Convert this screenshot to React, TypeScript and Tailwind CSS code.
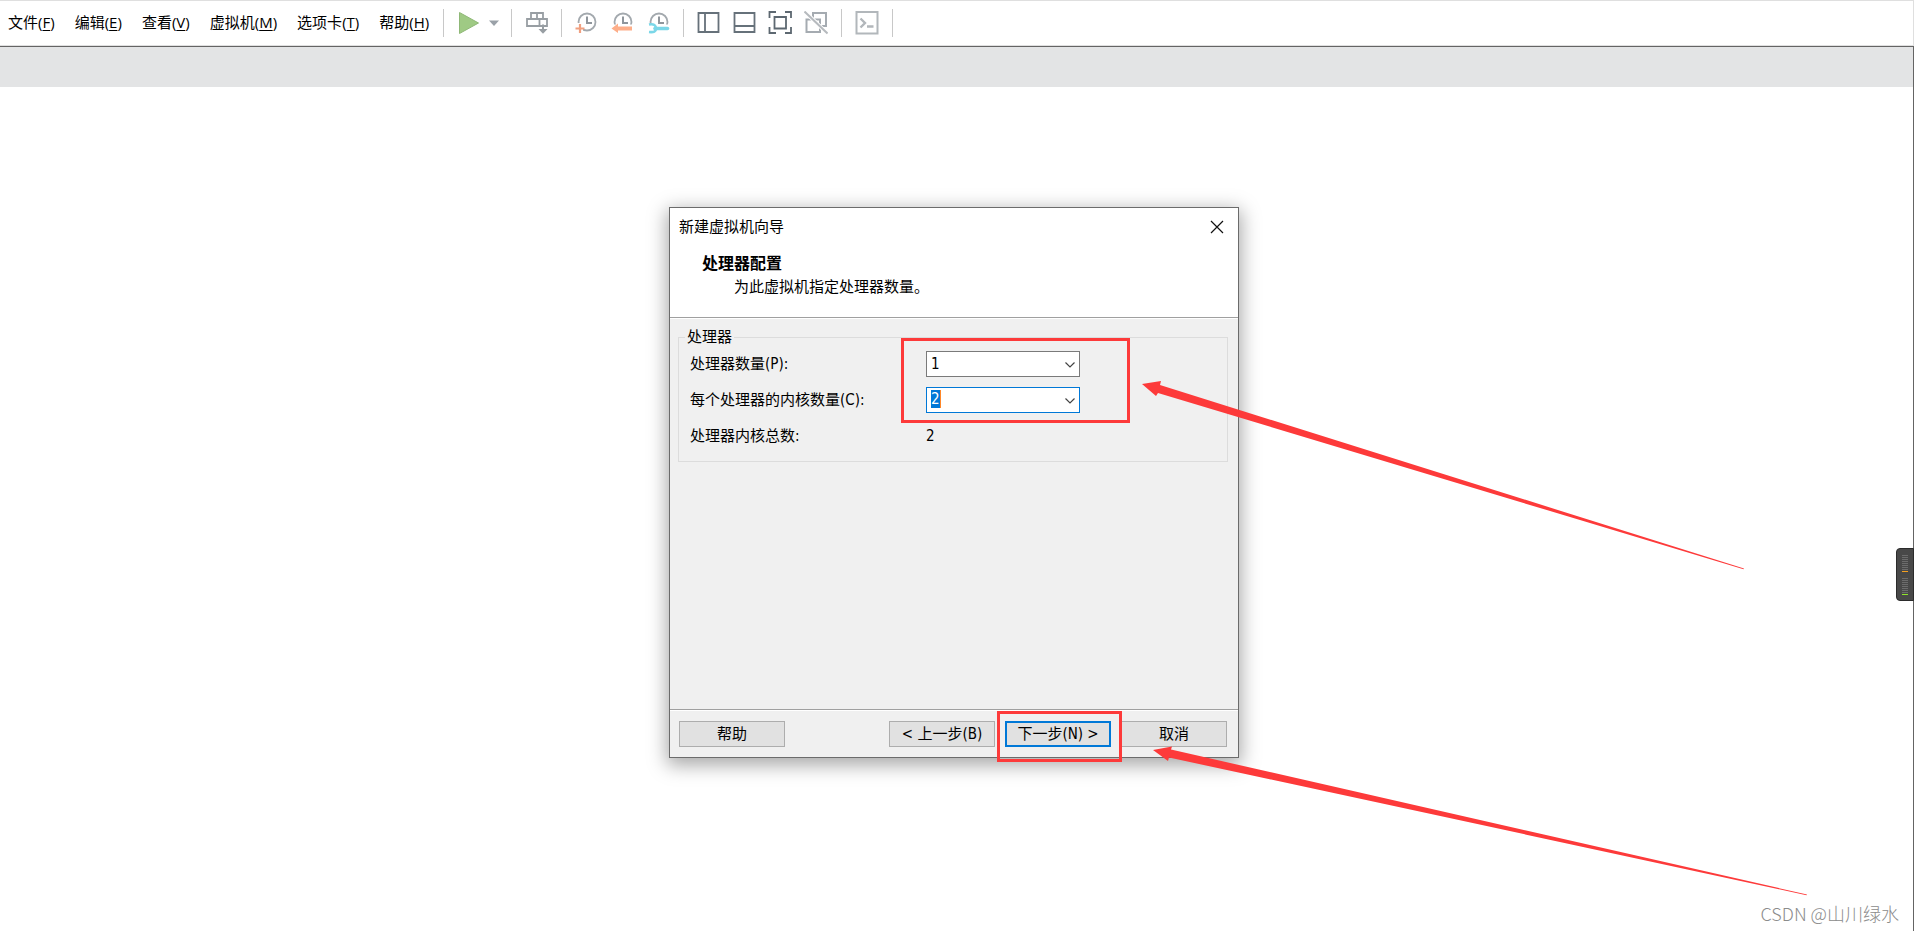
// App.tsx
// Virtual machine manager window with the "new virtual machine" wizard open
// on the processor step.

import type { ReactNode } from "react";

const MENUS = [
  { label: "文件", accel: "F" },
  { label: "编辑", accel: "E" },
  { label: "查看", accel: "V" },
  { label: "虚拟机", accel: "M" },
  { label: "选项卡", accel: "T" },
  { label: "帮助", accel: "H" },
];

const METER_ROWS = [0, 1, 2, 3, 4, 5, 6, 7];

function Separator() {
  return <span className="h-7 w-px shrink-0 bg-[#c8c8c8]" />;
}

function ToolButton({ title, children }: { title: string; children: ReactNode }) {
  return (
    <button type="button" aria-label={title} className="flex h-6 w-6 shrink-0 items-center justify-center">
      {children}
    </button>
  );
}

function ClockFace() {
  return (
    <>
      <circle cx="13" cy="11" r="8.5" fill="none" stroke="#a3a9ae" strokeWidth="1.8" />
      <path d="M13 5.5V12h5" fill="none" stroke="#8f969c" strokeWidth="2" />
    </>
  );
}

function Toolbar() {
  return (
    <div className="flex items-center">
      <Separator />
      <button type="button" aria-label="开机" className="ml-[15px] flex h-6 w-5 items-center">
        <svg width="20" height="22" viewBox="0 0 20 22">
          <path d="M0.5 0.5L19.5 11L0.5 21.5Z" fill="#9fca84" stroke="#8fb877" />
        </svg>
      </button>
      <button type="button" aria-label="电源选项" className="mr-3 ml-[10px] flex h-6 w-[10px] items-center">
        <svg width="10" height="6" viewBox="0 0 10 6">
          <path d="M0 0.5H10L5 6Z" fill="#9aa1a8" />
        </svg>
      </button>
      <Separator />
      <div className="mr-3 ml-[13px] flex">
        <ToolButton title="发送 Ctrl+Alt+Del">
          <svg width="24" height="24" viewBox="0 0 24 24" fill="none" stroke="#989ea3" strokeWidth="1.8">
            <path d="M6 8V2H18V8M12 2V8M2 8H22V15H2ZM14.5 8V15" />
            <path d="M18 13.5V20" strokeWidth="2" />
            <path d="M13.5 18H22.5L18 22.8Z" fill="#989ea3" stroke="none" />
          </svg>
        </ToolButton>
      </div>
      <Separator />
      <div className="mr-[13px] ml-3 flex gap-3">
        <ToolButton title="拍摄快照">
          <svg width="24" height="24" viewBox="0 0 24 24">
            <ClockFace />
            <path d="M1 12H9V22H1Z" fill="#fff" />
            <path d="M6 13V22M1.5 17.5H10.5" stroke="#f0a080" strokeWidth="2.2" />
          </svg>
        </ToolButton>
        <ToolButton title="恢复快照">
          <svg width="24" height="24" viewBox="0 0 24 24">
            <ClockFace />
            <path d="M0 13.5H24V24H0Z" fill="#fff" />
            <path d="M1.5 17.5L8 12.5V15.5H22V19.5H8V22Z" fill="#fdae89" />
          </svg>
        </ToolButton>
        <ToolButton title="管理快照">
          <svg width="24" height="24" viewBox="0 0 24 24">
            <ClockFace />
            <path d="M0 13.5H24V24H0Z" fill="#fff" />
            <path d="M3 13.5C8 12.5 10 14.5 10 17.5S8 21.5 3 21" fill="none" stroke="#7bd7e8" strokeWidth="2.6" />
            <path d="M9 17.5H21.5" stroke="#7bd7e8" strokeWidth="3.6" strokeLinecap="round" />
          </svg>
        </ToolButton>
      </div>
      <Separator />
      <div className="mr-[13px] ml-3 flex gap-3">
        <ToolButton title="显示库">
          <svg width="24" height="24" viewBox="0 0 24 24" fill="none" stroke="#66717a" strokeWidth="1.8">
            <path d="M2.5 2H22.5V21H2.5ZM9 2V21" />
          </svg>
        </ToolButton>
        <ToolButton title="显示缩略图">
          <svg width="24" height="24" viewBox="0 0 24 24" fill="none" stroke="#66717a" strokeWidth="1.8">
            <path d="M2.5 2H22.5V21H2.5ZM2.5 15H22.5" />
          </svg>
        </ToolButton>
        <ToolButton title="全屏">
          <svg width="24" height="24" viewBox="0 0 24 24" fill="none" stroke="#5d6871" strokeWidth="1.8">
            <path d="M1.5 7V1H8M17 1H23V7M23 16V22H17M8 22H1.5V16" />
            <path d="M6.5 6H18V17.5H6.5Z" />
          </svg>
        </ToolButton>
        <ToolButton title="Unity">
          <svg width="24" height="24" viewBox="0 0 24 24" fill="none" stroke="#a5abb1" strokeWidth="2">
            <path d="M9 8V2H22V15H16M2.5 8.5H16V21H2.5Z" />
            <path d="M0 0L24 23" stroke="#fff" strokeWidth="4" />
            <path d="M0.5 0.5L23.5 22.5" stroke="#b6babe" strokeWidth="2" />
          </svg>
        </ToolButton>
      </div>
      <Separator />
      <div className="mx-[13px] flex">
        <ToolButton title="控制台视图">
          <svg width="24" height="24" viewBox="0 0 24 24" fill="none" stroke="#b2b7bb" strokeWidth="2">
            <path d="M1.5 1H22.5V22.5H1.5Z" />
            <path d="M5.5 7.5L10 12L5.5 16.5M12 15.5H18.5" strokeWidth="2.4" />
          </svg>
        </ToolButton>
      </div>
      <Separator />
    </div>
  );
}

function Combo({ id, value, active = false }: { id: string; value: string; active?: boolean }) {
  return (
    <div className="relative h-[26px] w-[154px]">
      <select
        id={id}
        defaultValue={value}
        className={`h-full w-full appearance-none border bg-white pl-1 outline-none ${
          active ? "border-[#0078d7] text-transparent" : "border-[#7a7a7a]"
        }`}
      >
        <option>{value}</option>
      </select>
      {active && (
        <span className="pointer-events-none absolute top-[3px] left-[5px] h-[18px] border-r border-[#ff8728] bg-[#0078d7] leading-[18px] text-white">
          {value}
        </span>
      )}
      <svg className="pointer-events-none absolute top-[11px] right-[5px]" width="10" height="6" viewBox="0 0 10 6">
        <path d="M0.5 0.5L5 5L9.5 0.5" fill="none" stroke="#444" strokeWidth="1.2" />
      </svg>
    </div>
  );
}

function WizardButton({ children, primary = false }: { children: ReactNode; primary?: boolean }) {
  return (
    <button
      type="button"
      className={`h-[26px] w-[106px] bg-[#e1e1e1] whitespace-pre ${
        primary ? "border-2 border-[#0078d7]" : "border border-[#adadad]"
      }`}
    >
      {children}
    </button>
  );
}

function Wizard() {
  return (
    <section className="relative flex h-[551px] w-[570px] shrink-0 flex-col border border-[#6b6b6b] bg-[#f0f0f0] font-['DejaVu_Sans_Condensed','Noto_Sans_CJK_SC',sans-serif] text-[15px] leading-5 shadow-[0_5px_18px_2px_rgba(0,0,0,0.35)]">
      {/* Title bar and step heading */}
      <header className="h-[110px] border-b border-[#a0a0a0] bg-white">
        <div className="flex items-center justify-between pt-[9px] pr-[14px] pl-[9px]">
          <h1>新建虚拟机向导</h1>
          <button type="button" aria-label="关闭">
            <svg width="14" height="14" viewBox="0 0 14 14">
              <path d="M1 1L13 13M13 1L1 13" stroke="#111" strokeWidth="1.2" />
            </svg>
          </button>
        </div>
        <h2 className="mt-[17px] pl-8 text-[16px] font-bold">处理器配置</h2>
        <p className="mt-[3px] pl-16">为此虚拟机指定处理器数量。</p>
      </header>

      <div className="flex-1 border-t border-white pt-2 pr-[10px] pl-2">
        <fieldset className="border border-[#dcdcdc] pb-3 pl-[11px]">
          <legend className="-ml-[5px] px-[2px]">处理器</legend>
          <div className="grid grid-cols-[236px_1fr] items-center gap-y-[10px] pt-1">
            <label htmlFor="processors">处理器数量(P):</label>
            <Combo id="processors" value="1" />
            <label htmlFor="cores">每个处理器的内核数量(C):</label>
            <Combo id="cores" value="2" active />
            <span className="leading-[26px]">处理器内核总数:</span>
            <span>2</span>
          </div>
        </fieldset>
      </div>

      <footer className="border-t border-[#a0a0a0]">
        <div className="flex gap-[10px] border-t border-white py-[10px] pr-[11px] pl-[9px]">
          <div className="flex-1">
            <WizardButton>帮助</WizardButton>
          </div>
          <WizardButton>{"< 上一步(B)"}</WizardButton>
          <WizardButton primary>{"下一步(N) >"}</WizardButton>
          <WizardButton>取消</WizardButton>
        </div>
      </footer>

      {/* Highlights over the fields to fill in and the button to press */}
      <div className="pointer-events-none absolute top-[130px] left-[231px] h-[85px] w-[229px] border-[3px] border-[#fd3a3a]" />
      <div className="pointer-events-none absolute top-[503px] left-[327px] h-[51px] w-[125px] border-[3px] border-[#fd3a3a]" />
      <svg
        className="pointer-events-none absolute top-0 left-0 overflow-visible"
        width="568"
        height="549"
        viewBox="670 208 568 549"
        fill="#fd3a3a"
      >
        <path d="M1142 384L1161 381L1160 385L1744 568.5L1743.5 569.2L1158 393L1156 396Z" />
        <path d="M1153 750L1172 746.5L1171 749.5L1807 894.5L1806.5 895.2L1169 757.5L1168 761Z" />
      </svg>
    </section>
  );
}

function Meter({ color }: { color: string }) {
  return (
    <div className="flex flex-col gap-px">
      {METER_ROWS.map((row) => (
        <span key={row} className="h-px w-[6px] bg-[#6c6c6c]" />
      ))}
      <span className={`h-px w-[6px] ${color}`} />
    </div>
  );
}

export default function App() {
  return (
    <div className="flex min-h-screen flex-col bg-white font-['Open_Sans','Noto_Sans_CJK_SC',sans-serif] text-black">
      <header className="flex h-[46px] items-center border-t border-r border-b border-[#dfdfdf]">
        <nav className="mr-[14px] ml-2 flex gap-5 pb-[3px] text-[15px] leading-5">
          {MENUS.map((menu) => (
            <button key={menu.accel} type="button" className="whitespace-nowrap">
              {menu.label}(<u className="underline-offset-2">{menu.accel}</u>)
            </button>
          ))}
        </nav>
        <Toolbar />
      </header>

      <div className="relative flex flex-1 flex-col border-t border-r border-[#646464]">
        <div className="h-10 bg-[#e3e4e5]" />
        <main className="flex flex-1 justify-center pt-[120px] pr-[5px]">
          <Wizard />
        </main>

        {/* Meter docked on the right edge */}
        <aside className="absolute top-[501px] -right-px flex h-[53px] w-[18px] flex-col items-center justify-center gap-[6px] rounded-l-sm border border-[#2b2b2b] bg-[#484848]">
          <Meter color="bg-[#f5a020]" />
          <Meter color="bg-[#8fe32b]" />
        </aside>

        <p className="absolute right-[14px] bottom-[6px] font-['Noto_Sans_CJK_SC',sans-serif] text-[18px] leading-6 font-light text-[#8c8c8c]">
          CSDN @山川绿水
        </p>
      </div>
    </div>
  );
}
